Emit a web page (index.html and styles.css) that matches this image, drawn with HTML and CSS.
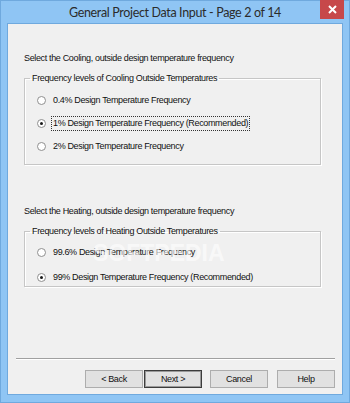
FILE: index.html
```html
<html>
  <head>
    <link rel="stylesheet" href="styles.css">
  </head>
  <body>
    <div class="window">
      <div class="titlebar">
        <span class="title">General Project Data Input - Page 2 of 14</span>
        <span class="close">
          <svg width="9" height="9" viewBox="0 0 9 9">
            <path d="M1 1 L8 8 M8 1 L1 8" stroke="#fff" stroke-width="2"/>
          </svg>
        </span>
      </div>
      <div class="client">
        <p class="prompt first">Select the Cooling, outside design temperature frequency</p>
        <fieldset class="group cooling">
          <legend>Frequency levels of Cooling Outside Temperatures</legend>
          <label class="option"><span class="radio"></span><span class="label">0.4% Design Temperature Frequency</span></label>
          <label class="option"><span class="radio checked"></span><span class="label focus">1% Design Temperature Frequency (Recommended)</span></label>
          <label class="option"><span class="radio"></span><span class="label">2% Design Temperature Frequency</span></label>
        </fieldset>

        <p class="prompt second">Select the Heating, outside design temperature frequency</p>
        <fieldset class="group heating">
          <legend>Frequency levels of Heating Outside Temperatures</legend>
          <label class="option"><span class="radio"></span><span class="label">99.6% Design Temperature Frequency</span></label>
          <label class="option"><span class="radio checked"></span><span class="label">99% Design Temperature Frequency (Recommended)</span></label>
          <span class="watermark">SOFTPEDIA</span>
        </fieldset>

        <div class="spacer"></div>
        <div class="separator"></div>
        <div class="buttons">
          <button class="btn back">&lt; Back</button>
          <button class="btn next default">Next &gt;</button>
          <button class="btn cancel">Cancel</button>
          <button class="btn help">Help</button>
        </div>
      </div>
    </div>
  </body>
</html>
```

FILE: styles.css
```css
body {
  margin: 0;
  background: #8cc4f5;
}

.window {
  width: 350px;
  height: 403px;
  display: flex;
  flex-direction: column;
  background: #8fc5f4;
  box-sizing: border-box;
  border: 1px solid #6fa9de;
}

.titlebar {
  height: 22px;
  position: relative;
  display: flex;
  justify-content: center;
  align-items: center;
}

.title {
  font-family: Lato, "Noto Sans", sans-serif;
  font-size: 12.5px;
  letter-spacing: -0.35px;
  color: #2b2b2b;
  margin-top: 1px;
}

/* close box sits over the frame */
.close {
  position: absolute;
  top: -1px;
  right: 5px;
  width: 24px;
  height: 19px;
  background: #c7484a;
  display: flex;
  align-items: center;
  justify-content: center;
}

.client {
  flex: 1;
  margin: 0 6px 7px 6px;
  background: #f0f0f0;
  border: 1px solid #6fa9de;
  display: flex;
  flex-direction: column;
  font-family: "Liberation Sans", Arial, sans-serif;
  font-size: 9px;
  letter-spacing: -0.35px;
  color: #111;
}

.prompt {
  margin: 0 0 0 16px;
  line-height: 13px;
}

.prompt.first {
  margin-top: 28px;
}

.prompt.second {
  margin-top: 40px;
}

.group {
  position: relative;
  margin: 7px 0 0 16px;
  width: 297px;
  box-sizing: border-box;
  padding: 0 0 0 12px;
  border: 1px solid #c6c6c6;
  box-shadow: inset 1px 1px 0 #fff, 1px 1px 0 #fff;
  display: flex;
  flex-direction: column;
}

.group legend {
  padding: 0 2px;
  margin-left: -7px;
  line-height: 13px;
}

.cooling {
  height: 93px;
  padding-top: 9px;
  gap: 10px;
}

.heating {
  height: 62px;
  padding-top: 8px;
  gap: 12px;
}

.option {
  display: flex;
  align-items: center;
  height: 13px;
}

.radio {
  width: 7px;
  height: 7px;
  border-radius: 50%;
  border: 1px solid #8f8f8f;
  background: #fff;
  margin-right: 5px;
  position: relative;
  box-sizing: content-box;
}

.radio.checked::after {
  content: "";
  position: absolute;
  left: 2px;
  top: 2px;
  width: 3px;
  height: 3px;
  border-radius: 50%;
  background: #1a1a1a;
}

.label {
  line-height: 13px;
  padding: 0 1px;
  border: 1px dotted transparent;
}

.label.focus {
  border-color: #333;
}

.watermark {
  position: absolute;
  left: 68px;
  top: 2px;
  font-family: "Liberation Sans", Arial, sans-serif;
  font-weight: bold;
  font-size: 23px;
  letter-spacing: 0;
  color: rgba(255, 255, 255, 0.6);
  pointer-events: none;
}

.spacer {
  flex: 1;
}

.separator {
  margin: 0 7px 0 8px;
  border-top: 1px solid #a0a0a0;
  border-bottom: 1px solid #fff;
}

.buttons {
  display: flex;
  justify-content: flex-end;
  padding: 10px 7px 6px 0;
}

.btn {
  width: 58px;
  height: 18px;
  padding: 0;
  font-family: "Liberation Sans", Arial, sans-serif;
  font-size: 9px;
  letter-spacing: -0.35px;
  color: #111;
  background: #e1e1e1;
  border: 1px solid #adadad;
  border-radius: 0;
}

.btn.default {
  border: 1px solid #3c3c3c;
  box-shadow: inset 0 0 0 1px #9a9a9a;
}

.btn.next {
  margin-left: 1px;
}

.btn.cancel {
  margin-left: 8px;
}

.btn.help {
  margin-left: 9px;
}
```
